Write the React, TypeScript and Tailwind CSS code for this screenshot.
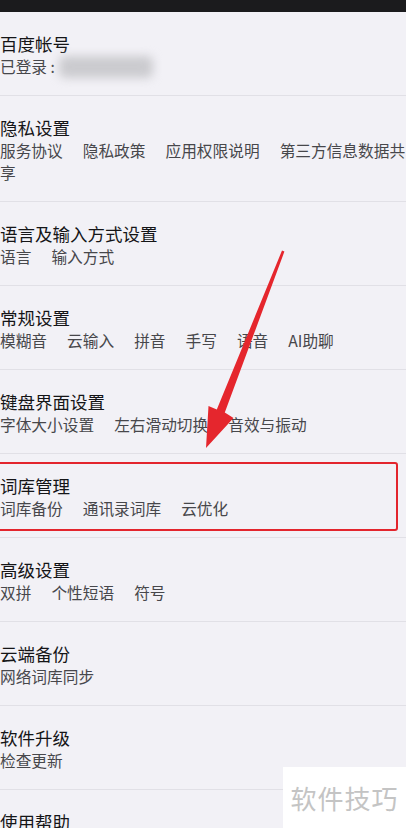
const font = { fontFamily: '"Noto Sans CJK SC", "Noto Sans", sans-serif' };

type Row = {
  title: string;
  items?: string[];
  lines?: string[][];
};

const rows: Row[] = [
  { title: "隐私设置", lines: [["服务协议", "隐私政策", "应用权限说明", "第三方信息数据共"], ["享"]] },
  { title: "语言及输入方式设置", items: ["语言", "输入方式"] },
  { title: "常规设置", items: ["模糊音", "云输入", "拼音", "手写", "语音", "AI助聊"] },
  { title: "键盘界面设置", items: ["字体大小设置", "左右滑动切换", "音效与振动"] },
  { title: "词库管理", items: ["词库备份", "通讯录词库", "云优化"] },
  { title: "高级设置", items: ["双拼", "个性短语", "符号"] },
  { title: "云端备份", items: ["网络词库同步"] },
  { title: "软件升级", items: ["检查更新"] },
  { title: "使用帮助", items: [] },
];

const SubLine = ({ items }: { items: string[] }) => (
  <div className="flex whitespace-nowrap text-[15.7px] leading-[22px] text-[#47474b]">
    {items.map((it, i) => (
      <span key={i} className="mr-5">
        {it}
      </span>
    ))}
  </div>
);

const SettingRow = ({ row }: { row: Row }) => (
  <div className="border-b border-[#e1e0e6] pt-[21px] pb-[17px]">
    <div className="text-[17.5px] leading-[22px] text-[#151517]">{row.title}</div>
    <div className="mt-[1px]">
      {row.lines ? (
        row.lines.map((l, i) => <SubLine key={i} items={l} />)
      ) : (
        <SubLine items={row.items || []} />
      )}
    </div>
  </div>
);

export default function App() {
  return (
    <div
      className="relative w-[406px] h-[828px] overflow-hidden bg-[#f2f1f6]"
      style={font}
    >
      <div className="h-[12px] bg-[#1b1b1d]" />

      <div className="border-b border-[#e1e0e6] pt-[21px] pb-[17px]">
        <div className="text-[17.5px] leading-[22px] text-[#151517]">百度帐号</div>
        <div className="mt-[1px] flex items-center text-[15.7px] leading-[22px] text-[#47474b]">
          <span>已登录 :</span>
          <span className="ml-[4px] inline-block w-[94px] h-[22px] rounded-md bg-[#cbcbcf] blur-[5px]" />
        </div>
      </div>

      {rows.map((r, i) => (
        <SettingRow key={i} row={r} />
      ))}

      {/* highlight box */}
      <div className="absolute left-[-10px] top-[462px] w-[408px] h-[69px] rounded-[3px] border-[2.5px] border-[#e3252d]" />

      {/* arrow */}
      <svg
        className="absolute left-0 top-0"
        width="406"
        height="828"
        viewBox="0 0 406 828"
      >
        <polygon
          points="282,250.5 284.4,251.6 224.8,412.5 233.5,418 206,448 208.5,406 216.8,409.5"
          fill="#e5262d"
        />
      </svg>

      {/* watermark */}
      <div className="absolute left-[283px] top-[767px] w-[123px] h-[61px] bg-white flex items-center justify-center">
        <span className="text-[26px] leading-none text-[#c4c4c4] tracking-[1px]">软件技巧</span>
      </div>
    </div>
  );
}
